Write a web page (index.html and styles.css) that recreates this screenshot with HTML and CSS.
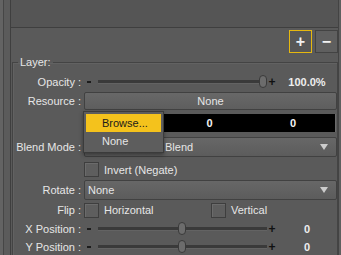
FILE: index.html
```html
<!DOCTYPE html>
<html lang="en">

<head>
    <meta charset="UTF-8">
    <meta name="viewport" content="width=device-width, initial-scale=1.0">
    <title>Layer Properties</title>
    <link rel="stylesheet" href="styles.css">
</head>

<body>
    <div class="window">
        <div class="gutter"></div>

        <div class="panel">
            <div class="preview"></div>

            <div class="toolbar">
                <button class="tool active">+</button>
                <button class="tool">&minus;</button>
            </div>

            <fieldset class="layer">
                <legend>Layer:</legend>
                <div class="form">
                    <div class="label">Opacity :</div>
                    <div class="slider">
                        <span class="minus"></span>
                        <div class="track"><span class="thumb" style="left: 161px"></span></div>
                        <span class="plus">+</span>
                        <span class="value">100.0%</span>
                    </div>

                    <div class="label">Resource :</div>
                    <div class="button">None</div>

                    <div class="label"></div>
                    <div class="fields">
                        <span>0</span>
                        <span>0</span>
                        <span>0</span>
                    </div>

                    <div class="label">Blend Mode :</div>
                    <div class="select">
                        <span>Normal (Alpha) Blend</span>
                        <span class="arrow"></span>
                    </div>

                    <div class="label"></div>
                    <div class="checks">
                        <label class="check"><span class="box"></span>Invert (Negate)</label>
                    </div>

                    <div class="label">Rotate :</div>
                    <div class="select">
                        <span>None</span>
                        <span class="arrow"></span>
                    </div>

                    <div class="label">Flip :</div>
                    <div class="checks">
                        <label class="check wide"><span class="box"></span>Horizontal</label>
                        <label class="check"><span class="box"></span>Vertical</label>
                    </div>

                    <div class="label">X Position :</div>
                    <div class="slider">
                        <span class="minus"></span>
                        <div class="track"><span class="thumb" style="left: 80px"></span></div>
                        <span class="plus">+</span>
                        <span class="value">0</span>
                    </div>

                    <div class="label">Y Position :</div>
                    <div class="slider">
                        <span class="minus"></span>
                        <div class="track"><span class="thumb" style="left: 80px"></span></div>
                        <span class="plus">+</span>
                        <span class="value">0</span>
                    </div>
                </div>
            </fieldset>
        </div>

        <div class="edge"></div>

        <!-- resource popup menu, open over the form -->
        <div class="popup">
            <div class="item selected">Browse...</div>
            <div class="item">None</div>
        </div>
    </div>
</body>

</html>
```

FILE: styles.css
```css
body {
    margin: 0;
    background: #5a5a5a;
    font-family: "Liberation Sans", Arial, sans-serif;
    font-size: 11px;
    color: #e6e6e6;
    overflow: hidden;
}

.window {
    position: relative;
    display: flex;
    width: 341px;
    height: 255px;
}

.gutter {
    width: 11px;
    flex: none;
    background: linear-gradient(to right, #636363 0 3px, #464646 3px 4px, #5b5b5b 4px 10px, #3f3f3f 10px 11px);
}

.panel {
    width: 327px;
    flex: none;
    display: flex;
    flex-direction: column;
}

.edge {
    flex: 1;
    background: linear-gradient(to right, #434343 0 1px, #5f5f5f 1px);
}

.preview {
    height: 27px;
    flex: none;
    background: #555555;
    border-bottom: 1px solid #3f3f3f;
}

.toolbar {
    display: flex;
    justify-content: flex-end;
    gap: 3px;
    padding-top: 2px;
}

.tool {
    width: 23px;
    height: 23px;
    padding: 0;
    border: 1px solid #434343;
    background: #5f5f5f;
    color: #f2f2f2;
    font-family: "Liberation Sans", Arial, sans-serif;
    font-size: 16px;
    font-weight: bold;
    line-height: 1;
    display: flex;
    align-items: center;
    justify-content: center;
}

.tool.active {
    border-color: #e6b80f;
    background: #575757;
}

.layer {
    flex: 1;
    margin: 2px 0 0 1px;
    padding: 3px 0 0;
    border: 1px solid #444444;
    border-bottom: none;
    box-shadow: inset 1px 1px 0 #626262;
    min-width: 0;
}

.layer legend {
    margin-left: 5px;
    padding: 0 2px;
    line-height: 14px;
}

.form {
    display: grid;
    grid-template-columns: 68px 253px;
    grid-template-rows: 19px 20px 24px 24px 21px 20px 20px 18px 18px;
    column-gap: 3px;
    align-items: center;
}

.label {
    text-align: right;
    white-space: nowrap;
}

/* sliders */
.slider {
    display: flex;
    align-items: center;
    height: 100%;
}

.minus {
    width: 4px;
    height: 2px;
    margin: 0 7px 0 3px;
    background: #1c1c1c;
}

.track {
    position: relative;
    width: 169px;
    height: 3px;
    background: #3a3a3a;
    border-bottom: 1px solid #636363;
}

.thumb {
    position: absolute;
    top: -5px;
    width: 8px;
    height: 13px;
    box-sizing: border-box;
    border: 1px solid #3a3a3a;
    border-radius: 4px;
    background: #6c6c6c;
}

.plus {
    width: 10px;
    text-align: center;
    color: #111111;
    font-size: 12px;
    font-weight: bold;
}

.value {
    flex: 1;
    text-align: center;
    font-weight: bold;
    color: #eeeeee;
}

/* buttons, fields, dropdowns */
.button {
    height: 18px;
    box-sizing: border-box;
    border: 1px solid #414141;
    border-radius: 2px;
    background: linear-gradient(#686868, #5e5e5e);
    display: flex;
    align-items: center;
    justify-content: center;
}

.fields {
    width: 251px;
    height: 18px;
    background: #000000;
    border-right: 1px solid #6a6a6a;
    display: grid;
    grid-template-columns: repeat(3, 1fr);
    align-items: center;
    text-align: center;
    font-weight: bold;
    color: #f4f4f4;
}

.select {
    height: 20px;
    box-sizing: border-box;
    padding: 0 8px 0 3px;
    border: 1px solid #414141;
    border-radius: 2px;
    background: linear-gradient(#676767, #5c5c5c);
    display: flex;
    align-items: center;
    justify-content: space-between;
}

.arrow {
    width: 0;
    height: 0;
    border-left: 4px solid transparent;
    border-right: 4px solid transparent;
    border-top: 6px solid #cccccc;
}

/* checkboxes */
.checks {
    display: flex;
    align-items: center;
}

.check {
    display: flex;
    align-items: center;
    gap: 5px;
}

.check.wide {
    width: 127px;
}

.box {
    width: 15px;
    height: 15px;
    box-sizing: border-box;
    border: 1px solid #3e3e3e;
    background: #5e5e5e;
    box-shadow: inset 1px 1px 0 #6b6b6b;
}

/* popup menu */
.popup {
    position: absolute;
    left: 83px;
    top: 111px;
    width: 81px;
    height: 42px;
    box-sizing: border-box;
    padding: 2px;
    border: 1px solid #3b3b3b;
    background: #5d5d5d;
    box-shadow: 0 2px 4px rgba(0, 0, 0, 0.4);
}

.item {
    height: 18px;
    line-height: 18px;
    padding-left: 16px;
}

.item.selected {
    background: #f4c21c;
    color: #1b1b1b;
}
```
